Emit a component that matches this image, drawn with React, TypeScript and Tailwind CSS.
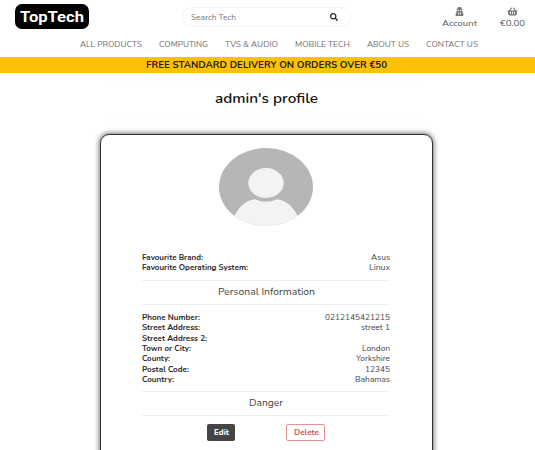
import React, { useLayoutEffect, useRef, useState } from 'react';
import { FaSearch, FaShoppingBasket, FaUserSecret } from 'react-icons/fa';

// A line of text stretched horizontally to the width of its box.
function Wide({ children, className = '' }: { children: React.ReactNode; className?: string }) {
  const box = useRef<HTMLDivElement>(null);
  const text = useRef<HTMLSpanElement>(null);
  const [ratio, setRatio] = useState(1);
  useLayoutEffect(() => {
    const fit = () => {
      if (box.current && text.current && text.current.offsetWidth) {
        const prev = text.current.style.transform;
        text.current.style.transform = 'none';
        const natural = text.current.getBoundingClientRect().width;
        text.current.style.transform = prev;
        setRatio(box.current.clientWidth / natural);
      }
    };
    fit();
    document.fonts.ready.then(fit);
  }, []);
  return (
    <div ref={box} className={`shrink-0 whitespace-nowrap ${className}`}>
      <span ref={text} className="inline-block origin-left" style={{ transform: `scaleX(${ratio})` }}>
        {children}
      </span>
    </div>
  );
}

const nav = [
  ['ALL PRODUCTS', 'w-[62px]'],
  ['COMPUTING', 'w-[49px]'],
  ['TVS & AUDIO', 'w-[53px]'],
  ['MOBILE TECH', 'w-[55px]'],
  ['ABOUT US', 'w-[42px]'],
  ['CONTACT US', 'w-[52px]'],
];

type Row = [string, string, string, string];

const favourites: Row[] = [
  ['Favourite Brand:', 'w-[61px]', 'Asus', 'w-[19px]'],
  ['Favourite Operating System:', 'w-[106px]', 'Linux', 'w-[21px]'],
];

const personal: Row[] = [
  ['Phone Number:', 'w-[58px]', '0212145421215', 'w-[65px]'],
  ['Street Address:', 'w-[58px]', 'street 1', 'w-[29px]'],
  ['Street Address 2:', 'w-[65px]', '', ''],
  ['Town or City:', 'w-[49px]', 'London', 'w-[28px]'],
  ['County:', 'w-[28px]', 'Yorkshire', 'w-[34px]'],
  ['Postal Code:', 'w-[47px]', '12345', 'w-[25px]'],
  ['Country:', 'w-[32px]', 'Bahamas', 'w-[35px]'],
];

function Rows({ rows }: { rows: Row[] }) {
  return (
    <dl className="w-[248px] text-[7.6px] leading-[10.4px]">
      {rows.map(([label, labelWidth, value, valueWidth]) => (
        <div key={label} className="flex h-[10.4px] justify-between">
          <dt><Wide className={`font-bold text-[#2a2a2a] ${labelWidth}`}>{label}</Wide></dt>
          <dd>{value && <Wide className={`text-[#444] ${valueWidth}`}>{value}</Wide>}</dd>
        </div>
      ))}
    </dl>
  );
}

export default function App() {
  return (
    <div className="flex h-[450px] w-[535px] flex-col overflow-hidden bg-white font-['Nunito','Open_Sans',sans-serif] text-[#444]">
      <header className="h-[57px] shrink-0">
        <div className="flex h-[36px] items-start">
          <div className="mt-[4px] ml-[15px] flex h-[25px] w-[74px] items-center justify-center rounded-[7px] bg-black font-['Roboto',sans-serif] text-[15px] leading-[16px] font-bold text-white">
            <Wide className="w-[64px]">TopTech</Wide>
          </div>
          <div className="mt-[7px] ml-[93px] flex h-[20px] w-[169px] items-center rounded-full border border-[#f3f3f3] pr-[12px] pl-[8px]">
            <Wide className="w-[45px] pt-px text-[7.6px] text-[#777]">Search Tech</Wide>
            <FaSearch className="ml-auto size-[8px] text-[#222]" />
          </div>
          <div className="mt-[7px] ml-[91px] flex w-[35px] flex-col items-center">
            <FaUserSecret className="h-[9px] w-[9px] text-[#777]" />
            <Wide className="mt-[1px] w-[35px] text-[8.5px] leading-[12px] text-[#555]">Account</Wide>
          </div>
          <div className="mt-[7px] ml-[23px] flex w-[25px] flex-col items-center">
            <FaShoppingBasket className="h-[9px] w-[11px] text-[#777]" />
            <Wide className="mt-[1px] w-[25px] text-[8.5px] leading-[12px] text-[#555]">€0.00</Wide>
          </div>
        </div>
        <nav className="flex gap-[17px] pt-[3px] pl-[80px] text-[7.6px] leading-[12px] text-[#707070]">
          {nav.map(([label, width]) => (
            <a key={label}><Wide className={width}>{label}</Wide></a>
          ))}
        </nav>
      </header>
      <div className="flex h-[16px] shrink-0 items-center justify-center bg-[#ffc107] pr-[3px] text-[9px] leading-[16px] font-bold text-[#222]">
        <Wide className="w-[241px]">FREE STANDARD DELIVERY ON ORDERS OVER €50</Wide>
      </div>
      <main className="flex flex-col items-center pr-[3px]">
        <div className="mt-[9px] flex h-[33px] w-[315px] items-center justify-center border-y border-[#fafafa]">
          <h1 className="text-[13px] leading-[18px] font-semibold text-[#111]">
            <Wide className="w-[103px]">admin&apos;s profile</Wide>
          </h1>
        </div>
        <section className="mt-[19px] flex h-[340px] w-[333px] shrink-0 flex-col items-center rounded-[9px] border-[1.5px] border-[#333] bg-white shadow-[0_0_5px_1px_rgba(0,0,0,0.55)]">
          <svg viewBox="0 0 94 78" className="mt-[13px] h-[78px] w-[94px] shrink-0" aria-label="Avatar">
            <ellipse cx="47" cy="39" rx="47" ry="39" fill="#b6b6b6" />
            <path d="M15.5 67.8C20 58 28 51.8 36 51.2Q47 56.5 58 51.2C66 51.8 74 58 78.5 67.8Q65 78 47 78Q29 78 15.5 67.8Z" fill="#f3f3f3" />
            <ellipse cx="47" cy="35" rx="17.7" ry="15" fill="#f3f3f3" />
          </svg>
          <div className="mt-[27px]"><Rows rows={favourites} /></div>
          <h2 className="mt-[6px] flex h-[25px] w-[248px] items-center justify-center border-y border-[#eee] text-[9px] leading-[12px]">
            <Wide className="w-[97px]">Personal Information</Wide>
          </h2>
          <div className="mt-[8px]"><Rows rows={personal} /></div>
          <h2 className="mt-[5px] flex h-[25px] w-[248px] items-center justify-center border-y border-[#eee] text-[9px] leading-[12px]">
            <Wide className="w-[34px]">Danger</Wide>
          </h2>
          <div className="mt-[8px] flex gap-[51px] text-[7.6px] leading-[10px] font-bold">
            <button className="flex h-[17px] w-[28px] items-center justify-center rounded-[2px] bg-[#444] font-extrabold text-white">
              <Wide className="w-[15px] pt-px">Edit</Wide>
            </button>
            <button className="flex h-[17px] w-[39px] items-center justify-center rounded-[2px] border border-[#e8909a] text-[#d9505f]">
              <Wide className="w-[25px] pt-px">Delete</Wide>
            </button>
          </div>
        </section>
      </main>
    </div>
  );
}
